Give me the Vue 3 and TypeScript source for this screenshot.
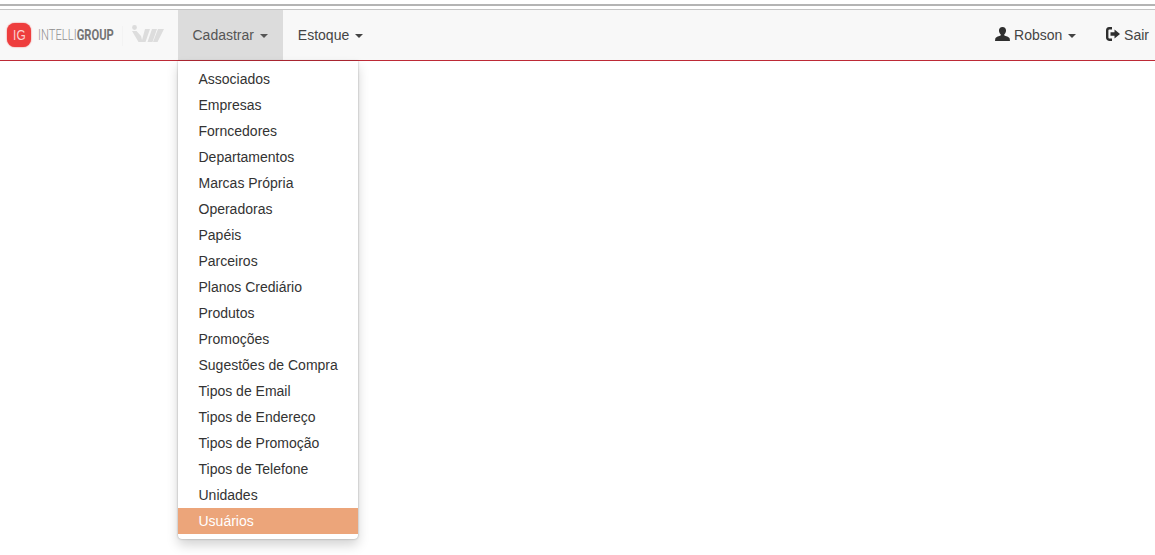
<template>
  <div class="page">
    <div class="top-rule"></div>
    <nav class="navbar">
      <div class="brand">
        <div class="logo-ig"><span>IG</span></div>
        <div class="brand-name"><span>INTELLI</span><b>GROUP</b></div>
        <div class="brand-sep"></div>
        <svg class="logo-w" width="32" height="18" viewBox="0 0 32 18">
          <circle cx="2.500" cy="2.500" r="2.400" fill="#dcdcdc" />
          <path d="M0 6h4.500l4.500 5 1.500 6H6.500zM13 4h5L13.500 17H9.500zM20 4h5L20.500 17H15.500zM26 4h6L25.500 17H21z" fill="#dddddd" />
        </svg>
      </div>
      <ul class="nav">
        <li class="nav-item open">
          <a>Cadastrar <span class="caret"></span></a>
          <ul class="dropdown">
            <li v-for="item in items" :key="item" :class="{ active: item === 'Usuários' }">{{ item }}</li>
          </ul>
        </li>
        <li class="nav-item"><a>Estoque <span class="caret"></span></a></li>
      </ul>
      <ul class="nav nav-right">
        <li class="nav-item">
          <a>
            <svg class="icon" width="15" height="14" viewBox="0 0 14 14" preserveAspectRatio="none">
              <path d="M7 0C4.900 0 3.700 1.600 3.700 3.600c0 1.500.6 2.900 1.500 3.700.3.3.3.8 0 1.100C4.300 9 .6 9.700.3 11.500L0 14h14l-.3-2.500C13.400 9.700 9.700 9 8.800 8.400c-.3-.3-.3-.8 0-1.100.9-.8 1.500-2.200 1.500-3.700C10.300 1.600 9.100 0 7 0z" fill="#2f2f2f" />
            </svg>
            Robson <span class="caret"></span>
          </a>
        </li>
        <li class="nav-item sair">
          <a>
            <svg class="icon" width="14" height="14" viewBox="0 0 14 14">
              <path d="M6 1.300H3.200A2.200 2.200 0 0 0 1.200 3.500v7a2.200 2.200 0 0 0 2 2.200H6" fill="none" stroke="#2f2f2f" stroke-width="2.400" />
              <path d="M4.500 5.300h4V2.500L14 7l-5.500 4.500V8.700h-4z" fill="#2f2f2f" />
            </svg>
            Sair
          </a>
        </li>
      </ul>
    </nav>
  </div>
</template>

<script setup lang="ts">
const items: string[] = [
  'Associados',
  'Empresas',
  'Forncedores',
  'Departamentos',
  'Marcas Própria',
  'Operadoras',
  'Papéis',
  'Parceiros',
  'Planos Crediário',
  'Produtos',
  'Promoções',
  'Sugestões de Compra',
  'Tipos de Email',
  'Tipos de Endereço',
  'Tipos de Promoção',
  'Tipos de Telefone',
  'Unidades',
  'Usuários'
]
</script>

<style scoped>
.page {
  font-family: "Liberation Sans", Arial, sans-serif;
  font-size: 14px;
  color: #333;
  height: 555px;
  overflow: hidden;
  background: #fff;
}

.top-rule {
  height: 2px;
  margin-top: 4px;
  background: #b4b4b4;
}

.navbar {
  display: flex;
  height: 50px;
  margin-top: 3px;
  background: #f8f8f8;
  border-top: 1px solid #c4c4c4;
  border-bottom: 1px solid #bd2a36;
}

.brand {
  position: relative;
  display: flex;
  align-items: center;
  width: 177.5px;
  padding-left: 7px;
  box-sizing: border-box;
}

.logo-ig {
  width: 24px;
  height: 24px;
  border-radius: 8px;
  background: #ee3d3d;
  box-shadow: 0 0 1.500px #ee3d3d;
  color: #fbd0d0;
  font-size: 14px;
  line-height: 24px;
  text-align: center;
}

.logo-ig span {
  display: inline-block;
  transform: scaleX(0.85);
}

.brand-name {
  margin-left: 7px;
  font-family: "Roboto", "Liberation Sans", sans-serif;
  font-size: 14px;
  line-height: 1;
  color: #8f8f8f;
  transform: scaleX(0.8);
  transform-origin: left center;
  white-space: nowrap;
}

.brand-name span {
  font-weight: 300;
}

.brand-name b {
  color: #747474;
  font-weight: 700;
}

.brand-sep {
  position: absolute;
  left: 122px;
  top: 16px;
  width: 1px;
  height: 20px;
  background: #f3f3f3;
}

.logo-w {
  position: absolute;
  left: 132px;
  top: 15px;
}

.nav {
  display: flex;
  list-style: none;
  margin: 0;
  padding: 0;
}

.nav-right {
  margin-left: auto;
}

.nav-item {
  position: relative;
}

.nav-item a {
  display: block;
  padding: 0 15px;
  line-height: 50px;
  color: #444;
  white-space: nowrap;
}

.nav-item.sair a {
  padding-right: 6px;
}

.nav-item.open a {
  background: #dcdcdc;
  color: #555;
}

.icon {
  vertical-align: -1px;
}

.caret {
  display: inline-block;
  width: 0;
  height: 0;
  margin-left: 2px;
  vertical-align: middle;
  border-top: 4px solid;
  border-left: 4px solid transparent;
  border-right: 4px solid transparent;
}

.dropdown {
  position: absolute;
  top: 51px;
  left: 0;
  width: 180px;
  margin: 0;
  padding: 5px 0;
  list-style: none;
  background: #fff;
  border-radius: 0 0 4px 4px;
  box-shadow: 0 6px 12px rgba(0, 0, 0, 0.175), 0 0 2px rgba(0, 0, 0, 0.35);
  z-index: 10;
}

.dropdown li {
  height: 26px;
  line-height: 26px;
  padding: 0 20px 0 21px;
  color: #333;
  white-space: nowrap;
}

.dropdown li.active {
  background: #eca57a;
  color: #fff;
}
</style>
